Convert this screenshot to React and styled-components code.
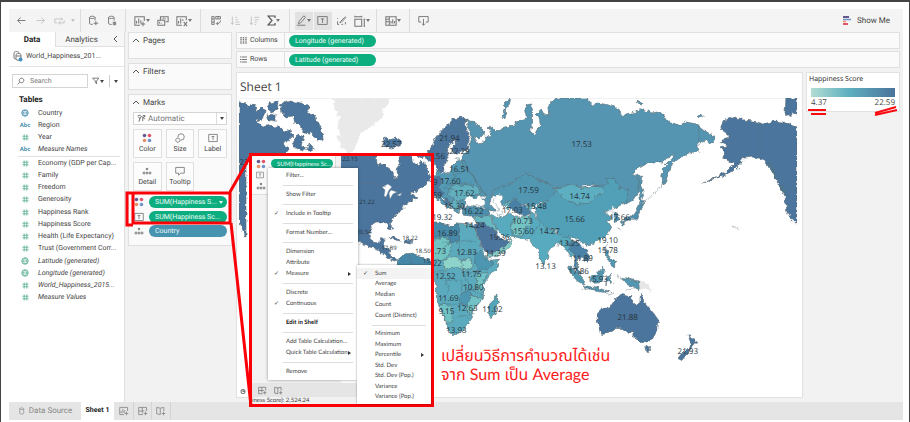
import styled, { createGlobalStyle } from 'styled-components';

const GlobalStyle = createGlobalStyle`
  * {
    box-sizing: border-box;
  }
  body {
    margin: 0;
    font-family: Roboto, 'Liberation Sans', sans-serif;
    font-size: 7px;
    line-height: 9px;
    color: #444;
    background-color: #fff;
    text-rendering: geometricPrecision;
  }
  button, input, select {
    font: inherit;
    color: inherit;
    border: 0;
    padding: 0;
    margin: 0;
    background: none;
    text-rendering: inherit;
  }
`;

const Frame = styled.div`
  position: relative;
  display: flex;
  flex-direction: column;
  min-height: 100vh;
  padding: 7px 6px 2px 8px;
  border: 1px solid #444;
  border-top-width: 2px;
  overflow: hidden;
`;

const Toolbar = styled.header`
  display: flex;
  height: 23px;
  background-color: #f4f4f4;
`;

const ToolGroup = styled.div`
  display: flex;
  align-items: center;
  justify-content: center;
  gap: 1px;
  width: ${(p) => p.$width}px;
  border-right: 1px solid ${(p) => (p.$last ? 'transparent' : '#dcdcdc')};
`;

const ToolButton = styled.button`
  display: flex;
  align-items: center;
  justify-content: center;
  width: ${(p) => p.$width || 18}px;
  height: 18px;
  color: ${(p) => (p.$dim ? '#c4c4c4' : '#777')};
  background-color: ${(p) => (p.$active ? '#e2e2e2' : 'transparent')};
`;

const ShowMe = styled.button`
  display: flex;
  align-items: center;
  gap: 5px;
  margin-left: auto;
  margin-right: 13px;
  font-size: 8px;
`;

const Body = styled.div`
  display: flex;
  flex: 1;
  background-color: #f2f2f2;
`;

const DataPane = styled.aside`
  width: 116px;
  flex: none;
  background-color: #fff;
  border-right: 1px solid #dedede;
`;

const PaneTabs = styled.div`
  display: flex;
  height: 15px;
  font-size: 8px;
`;

const PaneTab = styled.button`
  width: ${(p) => (p.$active ? 46 : 52)}px;
  font-weight: ${(p) => (p.$active ? 700 : 400)};
  color: ${(p) => (p.$active ? '#222' : '#444')};
  background-color: ${(p) => (p.$active ? '#fff' : '#f6f6f6')};
  border-left: ${(p) => (p.$active ? 0 : 1)}px solid #e0e0e0;
  border-bottom: ${(p) => (p.$active ? 0 : 1)}px solid #e0e0e0;
`;

const Collapse = styled.button`
  flex: 1;
  background-color: #f6f6f6;
  border-bottom: 1px solid #e0e0e0;
`;

const Source = styled.div`
  display: flex;
  align-items: center;
  gap: 3px;
  height: 20px;
  padding-left: 4px;
  border-bottom: 1px solid #e4e4e4;
`;

const SearchRow = styled.div`
  display: flex;
  align-items: center;
  gap: 4px;
  padding: 7px 4px 0 3px;
`;

const SearchBox = styled.label`
  display: flex;
  align-items: center;
  gap: 5px;
  width: 76px;
  height: 14px;
  padding-left: 4px;
  border: 1px solid #d4d4d4;
  input {
    width: 50px;
    outline: none;
  }
  input::placeholder {
    color: #777;
    opacity: 1;
  }
`;

const SmallButton = styled.button`
  display: flex;
  align-items: center;
  height: 12px;
  padding-right: ${(p) => (p.$divided ? 5 : 0)}px;
  border-right: ${(p) => (p.$divided ? 1 : 0)}px solid #ccc;
`;

const TablesTitle = styled.h2`
  margin: 7px 0 3px 10px;
  font-size: 8px;
  line-height: 9px;
  color: #222;
`;

const FieldList = styled.div`
  display: grid;
  grid-auto-rows: 1fr;
  height: ${(p) => p.$height}px;
  margin-right: 4px;
  border-bottom: ${(p) => (p.$divided ? 1 : 0)}px solid #e0e0e0;
  margin-left: 9px;
`;

const Field = styled.div`
  display: flex;
  align-items: center;
  font-style: ${(p) => (p.$italic ? 'italic' : 'normal')};
  white-space: nowrap;
`;

const FieldIcon = styled.span`
  display: flex;
  align-items: center;
  justify-content: center;
  width: 14px;
  margin-right: 6px;
  font-size: 6px;
  font-style: normal;
  font-weight: 700;
  color: #4a8fae;
`;

const Cards = styled.div`
  display: flex;
  flex-direction: column;
  gap: 4px;
  width: 108px;
  flex: none;
  padding: 0 1px 0 3px;
`;

const Card = styled.section`
  height: ${(p) => p.$height}px;
  padding: 3px 4px;
  background-color: #fafafa;
  border: 1px solid #e0e0e0;
`;

const CardTitle = styled.h2`
  display: flex;
  align-items: center;
  gap: 4px;
  margin: 0;
  font-size: 8px;
  line-height: 10px;
  font-weight: 400;
`;

const MarkType = styled.label`
  display: flex;
  align-items: center;
  gap: 2px;
  height: 13px;
  margin-top: 4px;
  padding-left: 3px;
  background-color: #fff;
  border: 1px solid #d4d4d4;
  select {
    flex: 1;
    font-size: 8px;
    line-height: 10px;
    color: #777;
    appearance: none;
    outline: none;
  }
`;

const DropArrow = styled.span`
  display: flex;
  align-items: center;
  justify-content: center;
  width: 10px;
  height: 11px;
  border-left: 1px solid #ddd;
`;

const MarkGrid = styled.div`
  display: grid;
  grid-template-columns: repeat(3, 1fr);
  gap: 4px;
  margin-top: 4px;
`;

const MarkButton = styled.button`
  display: flex;
  flex-direction: column;
  align-items: center;
  justify-content: center;
  gap: 2px;
  height: 29px;
  background-color: #fcfcfc;
  border: 1px solid #e0e0e0;
  svg {
    color: #777;
  }
`;

const PillRow = styled.div`
  display: flex;
  align-items: center;
  gap: 5px;
  height: ${(p) => p.$height || 15}px;
  color: #777;
`;

const PillRows = styled.div`
  margin-top: 3px;
  padding-left: 1px;
`;

const Pill = styled.button`
  display: flex;
  align-items: center;
  justify-content: space-between;
  flex: ${(p) => (p.$width ? 'none' : 1)};
  width: ${(p) => (p.$width ? p.$width + 'px' : 'auto')};
  height: ${(p) => p.$height || 12}px;
  padding: 1px 4px 0 6px;
  border-radius: 6px;
  white-space: nowrap;
  font-size: ${(p) => p.$size || 7}px;
  color: #eefaf6;
  background-color: ${(p) => (p.$blue ? '#4794b0' : '#0cae80')};
`;

const Main = styled.main`
  display: flex;
  flex-direction: column;
  flex: 1;
  min-width: 0;
  padding: 0 3px 4px;
`;

const Shelf = styled.div`
  display: flex;
  align-items: center;
  height: 17px;
  margin-bottom: ${(p) => p.$below}px;
  background-color: #fafafa;
  border: 1px solid #e0e0e0;
`;

const ShelfLabel = styled.div`
  display: flex;
  align-items: center;
  gap: 3px;
  width: 48px;
  height: 100%;
  margin-right: 4px;
  padding-left: 3px;
  border-right: 1px solid #e0e0e0;
`;

const Stage = styled.div`
  display: flex;
  align-items: flex-start;
  flex: 1;
  gap: 3px;
`;

const View = styled.section`
  flex: 1;
  min-width: 0;
  align-self: stretch;
  padding: 0 2px;
  background-color: #fff;
  border: 1px solid #e2e2e2;
  svg {
    display: block;
    width: 100%;
  }
`;

const SheetTitle = styled.h1`
  margin: 0;
  height: 25px;
  padding-left: 1px;
  font-family: 'Open Sans', sans-serif;
  font-size: 12px;
  line-height: 27px;
  font-weight: 400;
  color: #444;
`;

const Legend = styled.section`
  position: relative;
  width: 94px;
  height: 40px;
  padding: 2px 4px 2px 2px;
  background-color: #fff;
  border: 1px solid #e2e2e2;
`;

const LegendTitle = styled.h2`
  margin: 0;
  font-family: 'Open Sans', sans-serif;
  font-size: 7px;
  line-height: 10px;
  font-weight: 400;
  color: #222;
`;

const Ramp = styled.div`
  height: 9px;
  margin: 3px 0 0 2px;
  background: linear-gradient(to right, #b2ddd3, #5eafc0 45%, #4a739b);
`;

const RampEnds = styled.div`
  display: flex;
  justify-content: space-between;
  margin-left: 2px;
  font-family: 'Open Sans', sans-serif;
  font-size: 8px;
  line-height: 12px;
`;

const Underlines = styled.svg`
  position: absolute;
  top: 29px;
  right: 0;
`;

const SheetTabs = styled.nav`
  display: flex;
  height: 18px;
  background-color: #e5e5e5;
`;

const SheetTab = styled.button`
  display: flex;
  align-items: center;
  justify-content: center;
  gap: 3px;
  width: ${(p) => p.$width}px;
  font-size: ${(p) => (p.$active ? 7 : 8)}px;
  font-weight: ${(p) => (p.$active ? 700 : 400)};
  color: ${(p) => (p.$active ? '#222' : '#888')};
  background-color: ${(p) => (p.$active ? '#fff' : 'transparent')};
  border-right: ${(p) => (p.$divided ? 1 : 0)}px solid #d4d4d4;
`;

const Marker = styled.svg`
  position: absolute;
  left: 0;
  top: 0;
  pointer-events: none;
`;

const Callout = styled.div`
  position: absolute;
  left: 248px;
  top: 151px;
  width: 185px;
  height: 254px;
  display: flex;
  flex-direction: column;
  font-family: Lato, sans-serif;
  font-size: 6px;
  background-color: #f2f2f2;
  border: 3px solid #fb0007;
`;

const CalloutTop = styled.div`
  display: flex;
  flex: 1;
  min-height: 0;
`;

const CalloutMarks = styled.div`
  flex: none;
  width: 84px;
  height: 39px;
  padding: 2px 0 0 4px;
  background-color: #fafafa;
  border-right: 1px solid #ddd;
  border-bottom: 1px solid #ddd;
`;

const CalloutMap = styled.svg`
  flex: none;
  margin-left: 5px;
  width: 90px;
  height: 227px;
  background-color: #fff;
`;

const CalloutTabs = styled.div`
  display: flex;
  align-items: center;
  gap: 7px;
  height: 14px;
  padding-left: 6px;
  color: #777;
  background-color: #e5e5e5;
`;

const CalloutStatus = styled.div`
  height: 7px;
  line-height: 7px;
`;

const Menu = styled.div`
  position: absolute;
  left: 16px;
  top: 12px;
  width: 90px;
  padding: 2px 0 3px;
  background-color: #fff;
  box-shadow: 0 0 3px rgba(0, 0, 0, 0.4);
`;

const SubMenu = styled.div`
  position: absolute;
  left: 105px;
  top: 109px;
  display: flex;
  flex-direction: column;
  width: 74px;
  height: 139px;
  padding: 3px 0 2px;
  background-color: #fff;
  box-shadow: 0 0 2px rgba(0, 0, 0, 0.4);
  > button {
    height: auto;
    flex: 1;
  }
`;

const MenuItem = styled.button`
  display: flex;
  align-items: center;
  width: 100%;
  height: 11px;
  padding-right: 7px;
  text-align: left;
  white-space: nowrap;
  color: ${(p) => (p.$bold ? '#111' : '#444')};
  font-weight: ${(p) => (p.$bold ? 700 : 400)};
  background-color: ${(p) => (p.$active ? '#f3f3f3' : 'transparent')};
`;

const Check = styled.span`
  flex: none;
  width: 18px;
  padding-left: 6px;
  font-family: 'DejaVu Sans', sans-serif;
`;

const Arrow = styled.span`
  width: 0;
  height: 0;
  margin-left: auto;
  border: 2px solid transparent;
  border-left: 3px solid #333;
  border-right: 0;
`;

const Divider = styled.hr`
  flex: none;
  height: 1px;
  margin: 4px 5px 3px 15px;
  border: 0;
  background-color: #ddd;
`;

const Note = styled.p`
  position: absolute;
  left: 440px;
  top: 344px;
  margin: 0;
  font-family: 'Lato', 'Noto Sans Thai', sans-serif;
  font-size: 16px;
  line-height: 19px;
  white-space: nowrap;
  color: #fb2020;
`;

const glyphs = {
  back: 'M2 7H12M6 3L2 7L6 11',
  forward: 'M2 7H12M8 3L12 7L8 11',
  replay: 'M4 10H1V5H11M9 3L11 5L9 7M13 7V10H6M8 8L6 10L8 12',
  addData: 'M2 3C2 1 9 1 9 3C9 5 2 5 2 3V11C3 12 5 12 6 12M9 3V7M10 8V13M7 10.5H13',
  pauseData: 'M2 3C2 1 9 1 9 3C9 5 2 5 2 3V11C3 12 5 12 6 12M9 3V7M8 8.5V13M11 8.5V13M9.5 8.5V13',
  addSheet: 'M12 7V2H1V12H7M3 10V7M5.5 10V4M8 10V6M10.5 8V13M8 10.5H13',
  copySheet: 'M4 6V2H13V8H10M1 6H9V12H1ZM6 5V4M8 5V3M10 5V4M3 10V8M5 10V9',
  clearSheet: 'M12 6V2H1V12H7M3 10V7M5.5 10V4M8 7V5M9 8L13 13M13 8L9 13',
  swap: 'M1 2H4V12H1ZM1 5H4M1 9H4M6 2H12V5H6ZM9 2V5M12 7C12 10 10 11 7 11M9 9L7 11L9 13',
  sortAsc: 'M3 2V12M1 10L3 12L5 10M7 3H9M7 6H10M7 9H12M7 12H13',
  sortDesc: 'M3 2V12M1 10L3 12L5 10M7 3H13M7 6H12M7 9H10M7 12H9',
  highlight: 'M4 8L10 1L12 3L6 10L3 11ZM1 13H12',
  label: 'M1 2H13V12H1ZM5 5H9M7 5V10',
  format: 'M12 2L6 8L5 10L7 9L13 3M2 8V12H4M7 12H9M12 9V12M2 4V5',
  fit: 'M1 2H9M1 1V3M9 1V3M1 5H9V13H1ZM12 5V13M11 5H13M11 13H13',
  cards: 'M1 2H13V12H1ZM1 5H5M1 8H5M5 2V12M7 10V7M9 10V5M11 10V7',
  present: 'M4 9H1V2H13V9H10M7 5V13M5 11L7 13L9 11',
  filter: 'M1 2H12L8 7V12L6 10V7Z',
  search: 'M8 2A4 4 0 1 1 7.9 2M5 9L1 13',
  size: 'M4 7A3 3 0 1 0 4.1 7M4 6A4.5 4.5 0 1 1 8 10',
  tooltip: 'M1 2H13V10H8L5 13V10H1Z',
  dash: 'M12 7V2H1V12H7M1 7H9M6 2V10M10.5 8V13M8 10.5H13',
  story: 'M6 3L1 2V11L6 12M6 3L11 2V7M6 3V12M10.5 8V13M8 10.5H13',
  mapType: 'M1 3L4 2L7 4L5 6L3 12M9 2L13 3L10 5L12 8M2 5L5 7M9 4V11',
  source: 'M3 3C3 1 10 1 10 3V11C10 13 3 13 3 11ZM3 3C3 5 10 5 10 3',
};

const Glyph = ({ name, size = 11 }) => (
  <svg width={size} height={size} viewBox="0 0 14 14" fill="none" stroke="currentColor" strokeWidth="1.2">
    <path d={glyphs[name]} />
  </svg>
);

const Caret = () => (
  <svg width="4" height="3" viewBox="0 0 4 3">
    <path d="M0 0H4L2 3Z" fill="currentColor" />
  </svg>
);

const Chevron = ({ left }) => (
  <svg width="6" height="6" viewBox="0 0 6 6" fill="none" stroke="#555">
    <path d={left ? 'M4 0L1 3L4 6' : 'M0 4L3 1L6 4'} />
  </svg>
);

const ColorDots = () => (
  <svg width="10" height="10" viewBox="0 0 10 10">
    <circle cx="2.5" cy="2.5" r="1.8" fill="#66588f" />
    <circle cx="7.5" cy="2.5" r="1.8" fill="#e0566a" />
    <circle cx="2.5" cy="7.5" r="1.8" fill="#ee8e68" />
    <circle cx="7.5" cy="7.5" r="1.8" fill="#6f92c9" />
  </svg>
);

const DetailDots = () => (
  <svg width="10" height="10" viewBox="0 0 10 10" fill="none" stroke="#777">
    <circle cx="5" cy="3" r="0.8" fill="#777" />
    <circle cx="2" cy="7" r="1" />
    <circle cx="5" cy="7" r="1" />
    <circle cx="8" cy="7" r="1" />
  </svg>
);

const Hash = () => (
  <svg width="7" height="7" viewBox="0 0 7 7" stroke="#74bda2" strokeWidth="1.1">
    <path d="M2.2 0.5V6.5M4.8 0.5V6.5M0.5 2.2H6.5M0.5 4.8H6.5" />
  </svg>
);

const Globe = ({ color }) => (
  <svg width="8" height="8" viewBox="0 0 8 8" fill="none" stroke={color}>
    <circle cx="4" cy="4" r="3.2" />
    <path d="M1 4H7M4 1C2 3 2 5 4 7M4 1C6 3 6 5 4 7" strokeWidth="0.7" />
  </svg>
);

const dimensions = [
  { name: 'Country', icon: 'geo' },
  { name: 'Region', icon: 'text' },
  { name: 'Year', icon: 'number' },
  { name: 'Measure Names', icon: 'text', italic: true },
];

const measures = [
  { name: 'Economy (GDP per Cap...', icon: 'number' },
  { name: 'Family', icon: 'number' },
  { name: 'Freedom', icon: 'number' },
  { name: 'Generosity', icon: 'number' },
  { name: 'Happiness Rank', icon: 'number' },
  { name: 'Happiness Score', icon: 'number' },
  { name: 'Health (Life Expectancy)', icon: 'number' },
  { name: 'Trust (Government Corr...', icon: 'number' },
  { name: 'Latitude (generated)', icon: 'geoMeasure', italic: true },
  { name: 'Longitude (generated)', icon: 'geoMeasure', italic: true },
  { name: 'World_Happiness_2015...', icon: 'number', italic: true },
  { name: 'Measure Values', icon: 'number', italic: true },
];

const Fields = ({ items, height, divided }) => (
  <FieldList $height={height} $divided={divided}>
    {items.map((f) => (
      <Field key={f.name} $italic={f.italic}>
        <FieldIcon>
          {f.icon === 'text' && 'Abc'}
          {f.icon === 'number' && <Hash />}
          {f.icon === 'geo' && <Globe color="#4a8fae" />}
          {f.icon === 'geoMeasure' && <Globe color="#5bb091" />}
        </FieldIcon>
        {f.name}
      </Field>
    ))}
  </FieldList>
);

const menu = [
  { text: 'Filter...' },
  null,
  { text: 'Show Filter' },
  null,
  { text: 'Include in Tooltip', checked: true },
  null,
  { text: 'Format Number...' },
  null,
  { text: 'Dimension' },
  { text: 'Attribute' },
  { text: 'Measure', checked: true, more: true },
  null,
  { text: 'Discrete' },
  { text: 'Continuous', checked: true },
  null,
  { text: 'Edit in Shelf', bold: true },
  null,
  { text: 'Add Table Calculation...' },
  { text: 'Quick Table Calculation', more: true },
  null,
  { text: 'Remove' },
];

const aggregations = [
  { text: 'Sum', checked: true, active: true },
  { text: 'Average' },
  { text: 'Median' },
  { text: 'Count' },
  { text: 'Count (Distinct)' },
  null,
  { text: 'Minimum' },
  { text: 'Maximum' },
  { text: 'Percentile', more: true },
  { text: 'Std. Dev' },
  { text: 'Std. Dev (Pop.)' },
  { text: 'Variance' },
  { text: 'Variance (Pop.)' },
];

const MenuItems = ({ items }) =>
  items.map((item, i) =>
    item ? (
      <MenuItem key={i} $bold={item.bold} $active={item.active}>
        <Check>{item.checked ? '✓' : ''}</Check>
        {item.text}
        {item.more && <Arrow />}
      </MenuItem>
    ) : (
      <Divider key={i} />
    )
  );

const land = [
  // north america, left edge
  ['#4b759d', 'M240 102L246 103L249 107L255 104L258 111L263 106L267 112L263 119L257 121L263 126L271 124L275 128L280 125L285 132L291 129L294 136L289 141L284 144L290 149L286 154H250L247 165V237L243 228L240 219Z'],
  ['#4b759d', 'M271 103L279 101L278 109L272 112L268 107ZM281 104L291 101L302 103L310 107L308 113L315 114L317 121L322 124L321 131L325 137L323 142L317 139L311 133L304 132L301 125L296 124L294 116L287 117L283 113ZM299 134L305 137L302 145L308 148L304 151L296 148L293 143ZM268 115L276 114L276 122L270 121ZM310 143L315 148L312 152L308 150Z'],
  ['#e9e9e9', 'M333 98H391L388 106L383 109L384 118L376 123L369 129L362 133L358 142L355 151L350 153L343 149L338 138L341 133L338 128L340 118L336 109Z'],
  ['#4b759d', 'M383 141L386 138L390 140L396 137L401 140L401 145L393 148L387 147L384 144Z'],
  // scandinavia
  ['#4b759d', 'M428 152L432 147L436 139L442 131L448 125L454 119L462 117L468 119L466 124L470 139L468 149L460 153L454 153L453 147L457 142L456 139L450 145L448 151L449 157L445 165L444 172L440 173L437 165L433 162L431 169L428 167Z'],
  // europe
  ['#5299b3', 'M430 177L437 175L439 170L442 174L450 172L454 164L461 160L472 158L478 170L488 184L494 188L492 193L486 196L480 196L478 200L473 199L470 196L466 200L464 207L460 208L460 213L455 211L450 203L445 198L441 196L447 204L452 207L450 209L443 204L436 196L430 196Z'],
  ['#4b759d', 'M430 178L440 176L443 183L438 188L445 193L440 196L430 194ZM443 200L447 198L451 204L449 206Z'],
  ['#62b0bf', 'M452 184L464 184L479 187L481 193L474 196L466 199L458 201L449 195ZM450 203L456 200L464 206L456 208Z'],
  // russia
  ['#5495b1', 'M467 119L474 122L481 127L485 133L480 139L474 137L477 144L484 143L486 136L491 137L490 128L493 126L497 131L505 127L514 126L517 122L524 120L527 118L525 110L528 105L532 104L533 112L533 123L531 132L535 135L538 128L541 126L540 119L537 114L542 110L545 115L550 114L548 106L554 101L556 98H588L591 104L600 103L608 105L612 105L620 111L623 117L626 114L637 112L641 109L652 113L658 112L664 115L668 122L680 125L686 122L697 124L707 132L712 135L715 139L710 144L706 140L700 142L697 146L699 151L690 153L680 158L673 163L670 170L667 179L664 185L662 177L664 167L672 159L675 152L670 157L662 162L650 162L640 166L632 174L640 177L641 183L638 193L633 200L626 204L618 193L606 188L590 184L575 188L557 189L545 182L530 176L515 181L504 188L494 190L490 204L496 211L490 210L480 203L487 196L480 186L474 177L465 168L461 158L469 150L472 139Z'],
  ['#5495b1', 'M502 117L505 109L505 102L511 99L510 104L506 109L506 118ZM638 174L642 176L641 184L644 195L641 202L639 188ZM697 115L702 114L704 117L699 118ZM637 101L643 104L641 106ZM488 127L491 126L489 129Z'],
  // central asia and china
  ['#5197b1', 'M494 190L503 186L512 183L519 178L527 173L540 180L550 184L557 190L550 200L537 204L532 207L523 204L513 200L507 204L501 206L500 198L493 196Z'],
  ['#68b8c2', 'M503 204L510 201L523 206L534 206L532 211L526 214L518 211L508 208Z'],
  ['#4a80a5', 'M508 204L515 199L525 206L532 213L525 216L515 211Z'],
  ['#51a0b8', 'M557 190L570 188L586 187L595 186L609 184L606 179L614 177L620 188L629 190L627 201L619 206L610 211L604 211L607 214L613 218L608 221L612 227L608 234L602 239L597 241L591 244L587 245L581 241L573 237L563 239L557 231L546 227L540 222L536 214L535 207L550 200Z'],
  ['#5caec0', 'M555 189L563 187L571 184L583 189L592 186L603 187L605 192L596 196L590 203L578 204L566 200Z'],
  // middle east and india
  ['#4c8fac', 'M461 207L470 206L478 207L488 208L491 214L484 217L474 216L465 215Z'],
  ['#68b8c2', 'M474 217L484 216L490 215L495 225L499 229L497 232L491 228L485 224L477 223Z'],
  ['#4b759d', 'M474 225L481 222L489 225L495 230L499 237L505 240L510 242L506 248L498 251L489 253L484 249L479 237Z'],
  ['#82ccc8', 'M487 254L498 251L506 246L512 238L513 244L505 252L496 256L489 258Z'],
  ['#59abbe', 'M490 214L497 217L505 216L511 213L517 218L529 216L533 212L539 220L545 226L556 232L564 237L570 236L573 242L570 248L574 255L572 258L565 247L560 243L555 244L549 252L548 258L544 264L541 260L538 249L532 243L530 239L521 238L513 236L505 236L498 230L494 222Z'],
  ['#73c3c3', 'M515 217L530 216L531 224L524 229L523 236L514 235L511 225Z'],
  ['#4a82a6', 'M567 242L577 241L581 245L586 250L591 256L587 262L583 258L578 258L578 268L582 273L579 274L575 267L575 256L570 249Z'],
  // africa
  ['#5baabd', 'M433 222L440 222L451 226L459 223L474 224L477 233L481 243L484 252L490 260L500 259L497 268L489 277L484 284L484 298L475 308L471 320L464 330L457 334L451 334L446 322L442 310L437 300L437 285L433 278Z'],
  ['#4689a9', 'M433 222L440 222L451 226L460 224L460 240L453 243L443 236L433 239Z'],
  ['#73c5c4', 'M434 242L443 236L452 242L450 254L444 260L434 258Z'],
  ['#8dd3c9', 'M444 261L453 256L462 260L471 258L474 267L465 270L456 266L446 270Z'],
  ['#4e96b2', 'M474 255L481 251L488 260L494 263L487 270L478 270ZM462 293L470 290L474 297L468 305L459 303Z'],
  ['#70c2c4', 'M478 273L489 272L483 282L484 292L476 287ZM440 303L453 306L453 322L447 323L443 312ZM471 295L484 298L476 306L470 315L467 309Z'],
  ['#54a5ba', 'M489 314L490 304L495 299L497 294L499 302L495 314L492 318Z'],
  // asia pacific
  ['#5197b1', 'M568 267L572 267L579 274L585 281L584 284L578 281L571 273ZM583 285L593 287L603 289L611 291L603 292L591 290ZM592 276L598 273L603 267L606 270L603 276L602 282L595 283L591 280ZM607 276L613 273L609 278L614 284L608 280L606 285ZM605 248L610 251L609 257L615 260L615 267L610 263L606 256ZM622 278L629 279L639 281L640 290L633 286L627 284Z'],
  ['#e6e6e6', 'M640 280L648 284L652 291L645 288L640 290ZM608 210L615 206L613 214Z'],
  ['#4e90ae', 'M613 214L617 212L620 219L616 222ZM641 200L646 201L643 204L639 213L637 219L630 219L624 223L625 218L634 215L638 209ZM622 221L625 224L622 226Z'],
  ['#4b759d', 'M598 322L597 314L602 309L611 306L616 298L622 294L628 296L632 295L632 301L637 305L640 302L641 293L645 302L649 307L654 313L659 320L658 329L653 338L647 342L640 342L634 336L632 331L629 333L624 328L616 328L608 333L601 334ZM645 346L651 345L649 352L646 351ZM688 334L692 338L697 341L693 346L689 349L691 343ZM688 348L690 350L685 356L682 360L678 358L681 354Z'],
  // alaska
  ['#4b759d', 'M722 130L721 126L725 120L735 117L744 120L753 121L764 124L773 121L784 122L797 127V224L790 217L787 212L785 196L779 185L773 173L768 166L763 159L753 157L744 158L738 165L732 171L723 176L713 179L702 183L716 177L726 172L734 164L731 162L723 158L725 152L721 148L728 145L720 141L728 138L728 134ZM786 98H797V114L793 113L790 117L785 113Z'],
];

const mapLabels = [
  [450, 138, '21.94'], [460, 151, '22.29'], [440, 156, '.56'], [392, 144, '22.57'], [460, 169, '16.51'],
  [451, 181, '17.60'], [436, 182, '9'], [438, 195, '59'], [465, 193, '17.62'], [455, 206, '15.30'], [474, 211, '16.22'],
  [443, 217, '19.32'], [475, 225, '14.24'], [448, 233, '16.89'], [441, 251, '.73'], [467, 252, '12.83'],
  [496, 253, '11.39'], [438, 263, '22'], [446, 276, '12.52'], [472, 274, '11.75'], [474, 287, '10.80'],
  [449, 298, '11.69'], [447, 311, '9.15'], [468, 308, '12.63'], [493, 309, '11.02'], [457, 330, '13.93'],
  [500, 237, '19.36'], [529, 190, '17.59'], [537, 206, '15.48'], [513, 210, '17.03'], [523, 221, '10.73'],
  [524, 231, '15.60'], [550, 231, '14.27'], [580, 196, '14.74'], [575, 219, '15.66'], [582, 144, '17.53'],
  [546, 266, '13.13'], [570, 243, '13.25'], [583, 258, '11.89'], [579, 271, '17.86'], [598, 279, '15.93'],
  [620, 217, '17.66'], [608, 240, '19.10'], [608, 250, '15.78'], [628, 317, '21.88'], [688, 351, '21.93'],
];

const WorldMap = () => (
  <svg viewBox="240 98 560 298" role="img" aria-label="Happiness score by country">
    <defs>
      <filter id="coast" x="0" y="0" width="1" height="1">
        <feTurbulence type="fractalNoise" baseFrequency="0.25" numOctaves="2" seed="4" />
        <feDisplacementMap in="SourceGraphic" scale="5" xChannelSelector="R" yChannelSelector="G" />
      </filter>
    </defs>
    <path d="M240 98H800" stroke="#e4e4e4" />
    <g filter="url(#coast)">
      <g stroke="#5b6b73" strokeWidth="0.6" strokeLinejoin="round">
        {land.map(([fill, d], i) => (
          <path key={i} fill={fill} stroke={fill[1] === 'e' ? 'none' : undefined} d={d} />
        ))}
      </g>
      <g fill="#fff" stroke="#78919b" strokeWidth="0.5">
        <path d="M465 200L469 195L475 198L480 195L486 203L484 206L477 205L468 206Z" />
        <path d="M494 199L500 194L503 197L501 201L504 206L503 214L498 215L499 208L496 204Z" />
      </g>
      <g fill="none" stroke="#527482" strokeWidth="0.5">
        <path d="M462 120L459 128L464 139M453 121L447 137L445 153M455 158L466 161L468 170L455 175M455 172L456 186L447 184M470 171L477 181L464 184M460 224V241H476M451 226V241L443 250M443 242H460V256M434 272L444 270L446 280L462 280M462 260L464 276L474 288M477 271L464 275M446 281L450 291L440 300M440 303L459 304M462 280L462 294M470 289L483 295M456 317L466 315L471 319M530 238L536 230L541 222M562 238L557 247M573 240L569 250M517 218L511 226L513 236M456 194L462 200M444 187L457 190M583 289L595 289M601 274L594 276" />
        <path d="M731 225L735 226L738 229M617 226L621 231M644 201L654 194L663 184M603 251L609 244M633 281L640 280M617 276L623 280M626 290L635 288M607 294L613 292M618 273L619 278" stroke="#67777c" />
        <path d="M768 163L774 170L775 178M741 162L737 169M779 184L787 194" strokeWidth="1.5" />
      </g>
    </g>
    <path d="M760 123V158M786 189H797M699 124V141" stroke="#527482" strokeWidth="0.5" />
    <g fontFamily="'Open Sans', sans-serif" fontSize="8" fill="#263238" textAnchor="middle">
      <text x="245" y="165">22</text>
      {mapLabels.map(([x, y, text]) => (
        <text key={text + x} x={x} y={y + 3}>{text}</text>
      ))}
    </g>
    <g transform="translate(240 387)">
      <circle cx="4" cy="4" r="2" fill="none" stroke="#777" />
      <path d="M4 2V4H6" fill="none" stroke="#777" />
    </g>
  </svg>
);

const InsetMap = () => (
  <CalloutMap viewBox="341 156 90 227">
    <g fill="#4b759d" stroke="#5b6b73" strokeWidth="0.6" filter="url(#coast)">
      <path d="M336 150H375L377 163L384 165L390 169L393 173L394 178L398 177L396 170L400 165L398 158L402 156H411L414 163L418 166L422 160L426 167L431 178L424 186L418 190L411 194L417 198L409 202L403 207L399 213L393 217L390 222L392 230L388 228L386 222H376L372 225L369 234L372 242L379 243L381 238L385 239L383 246L389 250L391 257L398 260L394 261L385 256L377 249L366 246L357 241L349 237L344 231L336 233Z" />
      <path d="M399 259L404 254L412 253L420 256L434 262V322L420 300L400 280L396 269Z" fill="#4688a8" />
      <path d="M411 152H434V164L423 157Z" fill="#4b759d" />
      <path d="M389 237L397 238L401 241L395 240ZM405 241L412 240L411 244L406 243Z" />
    </g>
    <g fill="#fff" stroke="#6f8896" strokeWidth="0.5">
      <path d="M382 187L388 184L392 187L389 190L386 197L384 196L385 190ZM391 190L397 192L393 194L390 199L389 193ZM397 195L402 193L400 196Z" />
    </g>
    <path d="M341 183H373L386 187M349 237L355 231L366 236M391 247L387 250M409 255L412 264L425 266" fill="none" stroke="#5c7180" strokeWidth="0.5" />
    <g fontFamily="'Open Sans', sans-serif" fontSize="6" fill="#263238" textAnchor="middle">
      <text x="350" y="161">22.15</text>
      <text x="367" y="204">21.22</text>
      <text x="364" y="234">20.54</text>
      <text x="410" y="240">18.22</text>
      <text x="389" y="250">17.89</text>
      <text x="423" y="253">18.50</text>
      <text x="427" y="263">15.</text>
    </g>
  </CalloutMap>
);

const App = () => (
  <>
    <GlobalStyle />
    <Frame>
      <Toolbar>
        <ToolGroup $width={72}>
          <ToolButton aria-label="Undo"><Glyph name="back" /></ToolButton>
          <ToolButton aria-label="Redo" $dim><Glyph name="forward" /></ToolButton>
          <ToolButton aria-label="Replay" $dim><Glyph name="replay" /></ToolButton>
          <ToolButton aria-label="Replay options" $dim $width={8}><Caret /></ToolButton>
        </ToolGroup>
        <ToolGroup $width={45}>
          <ToolButton aria-label="New data source"><Glyph name="addData" /></ToolButton>
          <ToolButton aria-label="Pause updates"><Glyph name="pauseData" /></ToolButton>
        </ToolGroup>
        <ToolGroup $width={75}>
          <ToolButton aria-label="New worksheet" $width={20}><Glyph name="addSheet" size={12} /><Caret /></ToolButton>
          <ToolButton aria-label="Duplicate" $width={20}><Glyph name="copySheet" size={12} /></ToolButton>
          <ToolButton aria-label="Clear sheet" $width={20}><Glyph name="clearSheet" size={12} /><Caret /></ToolButton>
        </ToolGroup>
        <ToolGroup $width={89}>
          <ToolButton aria-label="Swap rows and columns"><Glyph name="swap" /></ToolButton>
          <ToolButton aria-label="Sort ascending" $dim><Glyph name="sortAsc" /></ToolButton>
          <ToolButton aria-label="Sort descending" $dim><Glyph name="sortDesc" /></ToolButton>
          <ToolButton aria-label="Totals">
            <svg width="9" height="11" viewBox="0 0 9 11" fill="none" stroke="#555" strokeWidth="1.2">
              <path d="M8 3V1H1L5 5.5L1 10H8V8" />
            </svg>
            <Caret />
          </ToolButton>
        </ToolGroup>
        <ToolGroup $width={87}>
          <ToolButton aria-label="Highlight" $active><Glyph name="highlight" /><Caret /></ToolButton>
          <ToolButton aria-label="Show labels" $active><Glyph name="label" /></ToolButton>
          <ToolButton aria-label="Format"><Glyph name="format" /></ToolButton>
          <ToolButton aria-label="Fit" $width={20}><Glyph name="fit" size={12} /><Caret /></ToolButton>
        </ToolGroup>
        <ToolGroup $width={33}>
          <ToolButton aria-label="Show cards" $width={20}><Glyph name="cards" size={12} /><Caret /></ToolButton>
        </ToolGroup>
        <ToolGroup $width={27} $last>
          <ToolButton aria-label="Presentation mode"><Glyph name="present" /></ToolButton>
        </ToolGroup>
        <ShowMe>
          <svg width="9" height="9" viewBox="0 0 9 9">
            <path d="M0 1H6" stroke="#66588f" strokeWidth="2" />
            <path d="M0 3.5H8" stroke="#6f92c9" strokeWidth="1.5" />
            <path d="M0 5.5H3" stroke="#ee8e68" strokeWidth="1.5" />
            <path d="M0 8H5" stroke="#e0566a" strokeWidth="2" />
          </svg>
          Show Me
        </ShowMe>
      </Toolbar>

      <Body>
        <DataPane>
          <PaneTabs>
            <PaneTab $active>Data</PaneTab>
            <PaneTab>Analytics</PaneTab>
            <Collapse aria-label="Collapse pane"><Chevron left /></Collapse>
          </PaneTabs>
          <Source>
            <svg width="10" height="11" viewBox="0 0 10 11" fill="none" stroke="#777">
              <path d="M1 2C1 0 6 0 6 2V3M1 2V7C1 8 3 8 3 8M3 4C3 2 8 2 8 4V8C8 10 3 10 3 8ZM3 5H8" />
              <circle cx="7.5" cy="8.5" r="2" fill="#3f8fc0" stroke="none" />
            </svg>
            World_Happiness_201...
          </Source>
          <SearchRow>
            <SearchBox>
              <Glyph name="search" size={8} />
              <input type="text" placeholder="Search" aria-label="Search fields" />
            </SearchBox>
            <SmallButton aria-label="Filter fields" $divided><Glyph name="filter" size={8} /><Caret /></SmallButton>
            <SmallButton aria-label="View options"><Caret /></SmallButton>
          </SearchRow>
          <TablesTitle>Tables</TablesTitle>
          <Fields items={dimensions} height={50} divided />
          <Fields items={measures} height={147} />
        </DataPane>

        <Cards>
          <Card $height={27}><CardTitle><Chevron />Pages</CardTitle></Card>
          <Card $height={27}><CardTitle><Chevron />Filters</CardTitle></Card>
          <Card $height={152}>
            <CardTitle><Chevron />Marks</CardTitle>
            <MarkType>
              <Glyph name="mapType" size={9} />
              <select aria-label="Mark type"><option>Automatic</option></select>
              <DropArrow><Caret /></DropArrow>
            </MarkType>
            <MarkGrid>
              <MarkButton><ColorDots />Color</MarkButton>
              <MarkButton><Glyph name="size" size={10} />Size</MarkButton>
              <MarkButton><Glyph name="label" size={10} />Label</MarkButton>
              <MarkButton><DetailDots />Detail</MarkButton>
              <MarkButton><Glyph name="tooltip" size={10} />Tooltip</MarkButton>
            </MarkGrid>
            <PillRows>
              <PillRow><ColorDots /><Pill>SUM(Happiness S...<Caret /></Pill></PillRow>
              <PillRow><Glyph name="label" size={10} /><Pill>SUM(Happiness Sc...</Pill></PillRow>
              <PillRow $height={14}><DetailDots /><Pill $blue>Country</Pill></PillRow>
            </PillRows>
          </Card>
        </Cards>

        <Main>
          <Shelf $below={2}>
            <ShelfLabel>
              <svg width="7" height="7" viewBox="0 0 7 7" stroke="#777" strokeWidth="1.4" strokeDasharray="1.5 0.6">
                <path d="M1 0V7M3.5 0V7M6 0V7" />
              </svg>
              Columns
            </ShelfLabel>
            <Pill $width={87}>Longitude (generated)</Pill>
          </Shelf>
          <Shelf $below={4}>
            <ShelfLabel>
              <svg width="7" height="7" viewBox="0 0 7 7" stroke="#777" strokeWidth="1.2">
                <path d="M0 1H1.5M2 1H7M0 3.5H1.5M2 3.5H7M0 6H1.5M2 6H7" />
              </svg>
              Rows
            </ShelfLabel>
            <Pill $width={87}>Latitude (generated)</Pill>
          </Shelf>
          <Stage>
            <View>
              <SheetTitle>Sheet 1</SheetTitle>
              <WorldMap />
            </View>
            <Legend>
              <LegendTitle>Happiness Score</LegendTitle>
              <Ramp />
              <RampEnds><span>4.37</span><span>22.59</span></RampEnds>
              <Underlines width="94" height="14" viewBox="0 0 94 14" fill="none" stroke="#f80c12" strokeWidth="2">
                <path d="M3 8L21 8M6 12H21M70 11L91 5M70 13L92 8" />
              </Underlines>
            </Legend>
          </Stage>
        </Main>
      </Body>

      <SheetTabs>
        <SheetTab $width={72}><Glyph name="source" size={8} />Data Source</SheetTab>
        <SheetTab $width={33} $active>Sheet 1</SheetTab>
        <SheetTab $width={20} $divided aria-label="New worksheet"><Glyph name="addSheet" size={10} /></SheetTab>
        <SheetTab $width={18} $divided aria-label="New dashboard"><Glyph name="dash" size={10} /></SheetTab>
        <SheetTab $width={19} $divided aria-label="New story"><Glyph name="story" size={10} /></SheetTab>
      </SheetTabs>

      <Callout>
        <CalloutTop>
          <CalloutMarks>
            <PillRow $height={11}><ColorDots /><Pill $width={62} $height={9} $size={6}>SUM(Happiness Sc...</Pill></PillRow>
            <PillRow $height={11}><Glyph name="label" size={8} /></PillRow>
            <PillRow $height={11}><DetailDots /></PillRow>
          </CalloutMarks>
          <InsetMap />
        </CalloutTop>
        <CalloutTabs><Glyph name="dash" size={9} /><Glyph name="story" size={9} /></CalloutTabs>
        <CalloutStatus>iness Score): 2,524.24</CalloutStatus>
        <Menu><MenuItems items={menu} /></Menu>
        <SubMenu><MenuItems items={aggregations} /></SubMenu>
      </Callout>

      <Marker width="260" height="420" viewBox="1 2 260 420" fill="none" stroke="#fb0007" strokeWidth="3">
        <path d="M133 193H230V223H133ZM133 193H127V225H133M230 192L251 155M231 223L251 406" />
      </Marker>
      <Note>
        เปลี่ยนวิธีการคำนวณได้เช่น
        <br />
        จาก Sum เป็น Average
      </Note>
    </Frame>
  </>
);

export default App;
